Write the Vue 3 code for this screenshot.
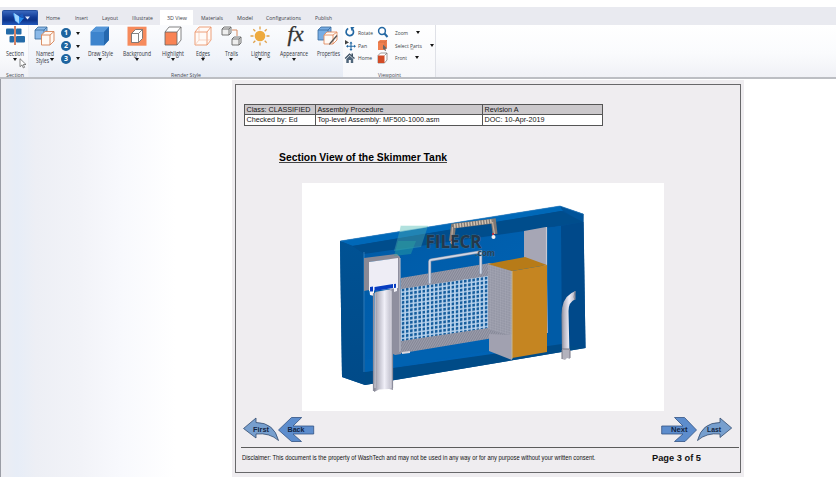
<script setup>
const tabs = [
  { t: 'Home', w: 30, l: 14 },
  { t: 'Insert', w: 27, l: 13 },
  { t: 'Layout', w: 29, l: 16 },
  { t: 'Illustrate', w: 36, l: 21 },
  { t: '3D View', w: 33, l: 20, active: true },
  { t: 'Materials', w: 37, l: 22 },
  { t: 'Model', w: 29, l: 16 },
  { t: 'Configurations', w: 49, l: 35 },
  { t: 'Publish', w: 30, l: 17 }
]
const tools = [
  { id: 'draw', t: 'Draw Style', w: 36, l: 25, caret: true },
  { id: 'background', t: 'Background', w: 38, l: 28, caret: true },
  { id: 'highlight', t: 'Highlight', w: 34, l: 22, caret: true },
  { id: 'edges', t: 'Edges', w: 26, l: 14, caret: true },
  { id: 'trails', t: 'Trails', w: 30, l: 13, caret: true },
  { id: 'lighting', t: 'Lighting', w: 28, l: 19, caret: true },
  { id: 'appearance', t: 'Appearance', w: 40, l: 28, caret: true },
  { id: 'properties', t: 'Properties', w: 28, l: 23 }
]
const views = [
  { id: 'rotate', t: 'Rotate', l: 15 }, { id: 'zoom', t: 'Zoom', l: 13, c: 8 },
  { id: 'pan', t: 'Pan', l: 9 }, { id: 'select', t: 'Select Parts', l: 27, c: 8 },
  { id: 'home', t: 'Home', l: 14 }, { id: 'front', t: 'Front', l: 12, c: 8 }
]
</script>

<template>
  <div class="app">
    <header class="tabbar">
      <div class="appbtn">
        <svg width="36" height="15" viewBox="0 0 36 15">
          <path d="M10 2l6 3 3 4-3 4-4-3z" fill="#3f9df5" /><path d="M11 2l5 3.500v7l-3.500-3z" fill="#9fd4ff" /><path d="M16 6l5 1-5 5.500z" fill="#2389ed" /><path d="M16 5l3.500-2.500L21 7z" fill="#1a5cc0" />
          <path d="M22 5.500h5l-2.500 3z" fill="#e7eeff" />
        </svg>
      </div>
      <nav class="tabs">
        <div v-for="t in tabs" :key="t.t" class="tab" :class="{ active: t.active }" :style="{ width: t.w + 'px' }">
          <svg :width="t.l" height="10"><text x="0" y="7.300" :textLength="t.l" lengthAdjust="spacingAndGlyphs">{{ t.t }}</text></svg>
        </div>
      </nav>
    </header>

    <section class="ribbon">
      <div class="group section">
        <div class="row">
          <div class="tool sec">
            <svg class="ico" width="22" height="21" viewBox="0 0 22 21">
              <g fill="#246ba8"><rect x="2" y="2.500" width="8" height="6" rx="1" /><rect x="12" y="2.500" width="5.500" height="6" rx="1" /><rect x="5.500" y="10" width="4.500" height="6.500" rx="1" /><rect x="12" y="10" width="9" height="6.500" rx="1" /></g>
              <path d="M11 0v19" stroke="#c75b35" stroke-width="1.500" />
            </svg>
            <svg width="18" height="9"><text x="0" y="6.800" textLength="18" lengthAdjust="spacingAndGlyphs">Section</text></svg>
            <i class="caret"></i>
            <svg class="cursor" width="8" height="11" viewBox="0 0 8 11"><path d="M1 .7v8l2-1.800 1.300 3 1.300-.6-1.300-2.800H7z" fill="#fff" stroke="#555" stroke-width=".7" /></svg>
          </div>
        </div>
        <div class="gname"><svg width="18" height="8"><text x="0" y="6.700" textLength="18" lengthAdjust="spacingAndGlyphs">Section</text></svg></div>
      </div>

      <div class="group render">
        <div class="row">
          <div class="tool named">
            <svg class="ico" width="21" height="21" viewBox="0 0 21 21">
              <path d="M1 4l3-3h9v9l-3 3H1z" fill="#8bb9e8" stroke="#376b9d" stroke-width=".8" /><path d="M1 4h9v9m0-9l3-3" fill="none" stroke="#376b9d" stroke-width=".8" />
              <path d="M7.500 9L11 5.500h9V15l-4 4H7.500z" fill="#fffaf6" stroke="#d78255" stroke-width=".9" /><path d="M7.500 9H16v10m0-10l4-3.500" fill="none" stroke="#d78255" stroke-width=".9" />
            </svg>
            <svg width="18" height="17"><text x="0" y="6.800" textLength="18" lengthAdjust="spacingAndGlyphs">Named</text><text x="0" y="14.200" textLength="13" lengthAdjust="spacingAndGlyphs">Styles</text><path d="M13.800 9h4.400L16 12z" fill="#111" /></svg>
          </div>
          <div class="nums">
            <div v-for="n in 3" :key="n" class="num"><b>{{ n }}</b><i class="caret small"></i></div>
          </div>
          <div v-for="t in tools" :key="t.id" class="tool" :style="{ width: t.w + 'px' }">
            <svg class="ico" width="22" height="21" viewBox="0 0 22 21">
              <template v-if="t.id === 'draw'">
                <path d="M1.500 6L7 .8h13V14l-5 5.500H1.500z" fill="#3d84cd" /><path d="M1.500 6L7 .8h13L15 6z" fill="#5597d9" /><path d="M15 6l5-5.200V14l-5 5.500z" fill="#2568ae" />
              </template>
              <template v-else-if="t.id === 'background'">
                <rect x="1.500" y=".7" width="19" height="19" fill="#f68a5c" /><path d="M5.500 7.500l4-4h7v9l-4 4h-7z" fill="#fff" /><path d="M5.500 7.500l4-4h7v9l-4 4h-7zM5.500 7.500h7v9m0-9l4-4" fill="none" stroke="#666" stroke-width=".8" />
              </template>
              <template v-else-if="t.id === 'highlight'">
                <path d="M3 6l4-5h12v13l-4 5H3z" fill="#fff" /><path d="M3 6h12v13H3z" fill="#f98354" /><path d="M3 6l4-5h12v13l-4 5H3zM3 6h12v13m0-13l4-5" fill="none" stroke="#666" stroke-width=".8" />
              </template>
              <template v-else-if="t.id === 'edges'">
                <path d="M3 6l4-5h12v13l-4 5H3zM3 6h12v13m0-13l4-5" fill="#fffaf7" stroke="#eb956c" stroke-width=".9" /><path d="M7 1v13h12M7 14l-4 5" fill="none" stroke="#f3bda3" stroke-width=".6" />
              </template>
              <template v-else-if="t.id === 'trails'">
                <path d="M2 3l2-2h7v6l-2 2H2zM2 3h7v6m0-6l2-2M12 13l2-2h7v6l-2 2h-7zM12 13h7v6m0-6l2-2" fill="#eee" stroke="#666" stroke-width=".9" /><path d="M12 4h5v6" fill="none" stroke="#d88a60" />
              </template>
              <template v-else-if="t.id === 'lighting'">
                <circle cx="11" cy="10" r="5.300" fill="#eeaa3e" /><path d="M11 .5v3m0 13v3M1.500 10h3m13 0h3M4.300 3.300l2 2m9.400 9.400l2 2m0-13.400l-2 2m-9.400 9.400l-2 2" stroke="#e0a14a" stroke-width="1.300" />
              </template>
              <text v-else-if="t.id === 'appearance'" class="fx" x="4.500" y="14.500" textLength="16" lengthAdjust="spacingAndGlyphs">fx</text>
              <template v-else>
                <path d="M1 4l3-3h10v9l-3 4H1z" fill="#77ace3" stroke="#376b9d" stroke-width=".8" /><path d="M1 4h10v10m0-10l3-3" fill="none" stroke="#376b9d" stroke-width=".8" />
                <path d="M7 9l3-3h10v8l-4 4H7zM7 9h9v9m0-9l4-3" fill="#fffaf6" stroke="#e38d61" stroke-width=".9" /><path d="M20.500 10l-7 8-1.500 1 .5-2 7-8z" fill="#555" />
              </template>
            </svg>
            <svg :width="t.l" height="9"><text x="0" y="6.800" :textLength="t.l" lengthAdjust="spacingAndGlyphs">{{ t.t }}</text></svg>
            <i v-if="t.caret" class="caret"></i>
          </div>
        </div>
        <div class="gname"><svg width="30" height="8"><text x="0" y="6.700" textLength="30" lengthAdjust="spacingAndGlyphs">Render Style</text></svg></div>
      </div>

      <div class="group viewpoint">
        <div class="vgrid">
          <div v-for="v in views" :key="v.id" class="vitem" :class="{ right: v.c }">
            <svg width="12" height="12" viewBox="0 0 12 12">
              <g v-if="v.id === 'rotate'"><path d="M4.200 2.600A3.700 3.700 0 1 0 8.300 3.200" fill="none" stroke="#2468a3" stroke-width="1.700" /><path d="M6.500 1h4L7.500 5z" fill="#2468a3" /></g>
              <g v-else-if="v.id === 'zoom'" fill="none" stroke="#2468a3"><circle cx="5" cy="5" r="3.400" stroke-width="1.500" /><path d="M7.500 7.500l3 3.500" stroke-width="2" /></g>
              <g v-else-if="v.id === 'pan'"><path d="M1 1l4 2.500-4 2z" fill="#444" /><path d="M7 3.500v7M3.500 7.200h7" stroke="#2468a3" stroke-width="1.100" /><path d="M5.500 4.500L7 2.500l1.500 2zM5.500 10L7 12l1.500-2zM4 5.700L2 7.200l2 1.500zM10 5.700l2 1.500-2 1.500z" fill="#2468a3" /></g>
              <g v-else-if="v.id === 'select'"><path d="M1 3l2-2h7v8l-2 2H1z" fill="#f0804f" /><path d="M1 3h7v8m0-8l2-2" fill="none" stroke="#c9623a" stroke-width=".6" /><path d="M6 5.500l4 4-2 .2 1 2-1 .3-1-2.200-1 1z" fill="#666" /></g>
              <g v-else-if="v.id === 'home'"><path d="M.700 6L5.500 1.300 7.500 3V1.500H9v3L11 6 10 7 5.700 3 1.500 7z" fill="#3f5366" /><path d="M2.300 7l3.400-3.200L9.200 7v4H6.800V8H4.800v3H2.300z" fill="#50667a" /></g>
              <g v-else><path d="M1 3.500L3.500 1H10v7L7.500 11H1z" fill="#fff" stroke="#77716f" stroke-width=".7" /><path d="M1 3.500h6.500V11H1z" fill="#d24b26" /><path d="M7.500 3.500L10 1" stroke="#77716f" stroke-width=".7" /></g>
            </svg>
            <svg class="vt" :width="v.l" height="9"><text x="0" y="6.800" :textLength="v.l" lengthAdjust="spacingAndGlyphs">{{ v.t }}</text><path v-if="v.id === 'select'" d="M15.500 8h3" stroke="#555" stroke-width=".6" /></svg>
            <i v-if="v.c" class="caret small"></i>
          </div>
        </div>
        <div class="gname"><svg width="23" height="8"><text x="0" y="6.700" textLength="23" lengthAdjust="spacingAndGlyphs">Viewpoint</text></svg></div>
      </div>
    </section>

    <main class="work">
      <article class="page">
        <div class="sheet">
          <div class="info">
            <div class="c h"><svg width="69" height="9"><text x="1.500" y="7" textLength="64" lengthAdjust="spacingAndGlyphs">Class: CLASSIFIED</text></svg></div>
            <div class="c h"><svg width="160" height="9"><text x="1.500" y="7" textLength="66" lengthAdjust="spacingAndGlyphs">Assembly Procedure</text></svg></div>
            <div class="c h"><svg width="110" height="9"><text x="1.500" y="7" textLength="34" lengthAdjust="spacingAndGlyphs">Revision A</text></svg></div>
            <div class="c"><svg width="69" height="9"><text x="1.500" y="7" textLength="51" lengthAdjust="spacingAndGlyphs">Checked by: Ed</text></svg></div>
            <div class="c"><svg width="160" height="9"><text x="1.500" y="7" textLength="122" lengthAdjust="spacingAndGlyphs">Top-level Assembly: MF500-1000.asm</text></svg></div>
            <div class="c"><svg width="110" height="9"><text x="1.500" y="7" textLength="60" lengthAdjust="spacingAndGlyphs">DOC: 10-Apr-2019</text></svg></div>
          </div>
          <h1><svg width="168" height="14"><text x="0" y="9.500" textLength="168" lengthAdjust="spacingAndGlyphs">Section View of the Skimmer Tank</text><path d="M0 11.500h168" stroke="#444" stroke-width="1.200" /></svg></h1>
          <svg class="model" width="362" height="228" viewBox="302 183 362 228">
            <defs>
              <linearGradient id="back" x1="0" y1="0" x2="1" y2="1"><stop offset="0" stop-color="#005aa5" /><stop offset="1" stop-color="#0066ba" /></linearGradient>
              <linearGradient id="left" x1="0" y1="0" x2="0" y2="1"><stop offset="0" stop-color="#005294" /><stop offset="1" stop-color="#004a88" /></linearGradient>
              <linearGradient id="tube" x1="0" x2="1"><stop offset="0" stop-color="#82828f" /><stop offset=".18" stop-color="#b4b3c0" /><stop offset=".55" stop-color="#f0eff8" /><stop offset=".84" stop-color="#c9c8d4" /><stop offset="1" stop-color="#8d8d9a" /></linearGradient>
              <pattern id="mesh" width="4.150" height="4.200" patternUnits="userSpaceOnUse" patternTransform="translate(401 288) skewY(-8)"><rect width="4.150" height="4.200" fill="#b8d2ec" /><rect x=".8" y=".8" width="2.500" height="2.800" fill="#155d9d" /></pattern>
              <pattern id="hatch" width="2" height="2" patternUnits="userSpaceOnUse" patternTransform="rotate(30)"><rect width="2" height="2" fill="#9b9dac" /><rect width="1" height="2" fill="#858796" /></pattern>
              <pattern id="grid" width="2.500" height="2.500" patternUnits="userSpaceOnUse" patternTransform="skewY(16)"><rect width="2.500" height="2.500" fill="#9597a6" /><path d="M0 0h2.500M0 0v2.500" stroke="#b0b0be" stroke-width=".6" /></pattern>
            </defs>
            <path d="M340 241L560 206l23.500 8L585.500 348 365 385l-23-8z" fill="#004f92" />
            <path d="M340 241L560 206l8 4-215 36z" fill="#0068b8" />
            <path d="M560 206l23.500 8-.5 9-21-13z" fill="#005399" />
            <path d="M352 246l209-35 22 11-219 32z" fill="#004d8c" />
            <path d="M340 241l12 5 12 8 1 131-23-8z" fill="url(#left)" />
            <path d="M364 254l197-28 1 119-197 27z" fill="url(#back)" />
            <path d="M547 228l15-2 1 119-16 3z" fill="#005ba6" />
            <path d="M561 226l22.500-4 2 126-23.500-3z" fill="#00498a" />
            <path d="M365 372l197-28 23.500 4L365 385z" fill="#004b87" />
            <path d="M365 360l124-19 24 6-148 25z" fill="#0062b1" />
            <path d="M364 252v120" stroke="#3f91ce" stroke-width=".7" />
            <path d="M340.500 241L560 206l23 8" fill="none" stroke="#3585c5" stroke-width=".6" />
            <path d="M524 231l22-4 2 106h-3V266l-21-7z" fill="#a6a6b5" /><path d="M546.500 227v106" stroke="#c8c8d1" stroke-width="1.200" />
            <path d="M397 254l3 3 1 97-6 1-5-3V256z" fill="#8f8f9f" /><path d="M400 258v95" stroke="#c5c4cd" />
            <path d="M364 258l32-4 4 4-31 4v28l-5 1z" fill="#898995" />
            <path d="M369 262l29-4v30l-29 3z" fill="#eeedf5" />
            <path d="M369 287l28-4v8l-3 1v-5l-20 3v6l-4-1z" fill="#f4f4fb" /><path d="M374.500 287l18.500-3v4l-18.500 3zM370 287l3-.4v5l-3-.2zM394 284l2-.3v4l-2 .4z" fill="#083dc0" />
            <path d="M375 292l17-3 1 101-4-1-10 .5-5 2.500z" fill="url(#tube)" /><path d="M373.500 293v98M392.500 290v98" stroke="#8d8e9d" stroke-width="1.200" />
            <path d="M375 293v95M391 291v97" stroke="#e7e6ef" stroke-width=".8" />
            <path d="M401 278l89-15 22 8v64l-109 18h-5l3-2z" fill="url(#hatch)" />
            <path d="M401 289l87-13v52l-87 13z" fill="url(#mesh)" />
            <path d="M488 263l24 8v65l-24-7z" fill="url(#grid)" />
            <path d="M489 334l23 1v25l-23-9z" fill="#a1a1b0" />
            <path d="M402 352l8-1v2l-8 1z" fill="#d8d8df" />
            <path d="M429.700 283.500V261.200q0-1 1.500-1.300l49.500-8.200v22" fill="none" stroke="#7f91ad" stroke-width="3" /><path d="M429.700 283.500V261.200q0-1 1.500-1.300l49.500-8.200v22" fill="none" stroke="#d1d7e5" stroke-width="1.800" />
            <path d="M488 264l37-7 22 8-35 6z" fill="#b77b18" /><path d="M512 271l35-6v87l-35 6z" fill="#c58521" /><path d="M512 271v88" stroke="#c4b797" stroke-width="1" />
            <path d="M562 357l-.5-42q0-16 10-22l4-2v8q-7 3-7 12l1 45-3 1z" fill="url(#tube)" /><path d="M575 291l-1 6 1 3" fill="none" stroke="#878896" /><path d="M562 349h8v10l-3-1-2 2-3-1z" fill="#b3b2bd" /><path d="M562 349h8m-8 1v9m8-9v8" stroke="#777784" />
            <path d="M401 226h27l-7 21-27 4z" fill="#4aa7b0" opacity=".45" /><path d="M398 241h18l-5 13-17 2z" fill="#2ba4a2" opacity=".45" />
            <path d="M400.500 225.500h27.500l-1.500 2-27 4.500z" fill="#b4e8df" opacity=".6" />
            <path d="M451.500 241l2-15 40-5 1.500 13" fill="none" stroke="#817974" stroke-width="5" /><path d="M454 226l39-5" stroke="#d4c4b2" stroke-width="4" stroke-dasharray="1.500 1.300" /><path d="M451.500 242l1-15m40-5l2 12" stroke="#c2aea0" stroke-width="1.200" />
            <circle cx="452.500" cy="242.500" r="2" fill="#f4eeee" /><circle cx="493.500" cy="237" r="2" fill="#f4eeee" /><path d="M452 239v2m41-8v2" stroke="#bc3440" stroke-width="2" />
            <text class="mark" x="425.500" y="247.500" textLength="56" lengthAdjust="spacingAndGlyphs">FILECR</text>
            <text class="com" x="475" y="255.500" textLength="20" lengthAdjust="spacingAndGlyphs">.com</text>
          </svg>
          <div class="nav">
            <svg width="74" height="26" viewBox="242 416 74 26">
              <path d="M243.500 428.500L256 418v4.500q18 0 22.500 18-9-8-22.500-6.500v4z" fill="#779fce" stroke="#344b6e" stroke-width=".8" />
              <path d="M278.500 430l13-12.500h10.200L293 426h20.700v8H293l8.500 7.500h-10z" fill="#5d8dcd" stroke="#345383" stroke-width=".8" />
              <text x="253" y="432" textLength="16" lengthAdjust="spacingAndGlyphs">First</text><text x="287.500" y="432" textLength="17" lengthAdjust="spacingAndGlyphs">Back</text>
            </svg>
            <svg width="74" height="26" viewBox="660 416 74 26">
              <path d="M661.700 426H683l-8.500-8.500h10l12 12.500-11.500 11.500h-10.500l8.500-7.500h-21.300z" fill="#5d8dcd" stroke="#345383" stroke-width=".8" />
              <path d="M731.700 428L720 418v4.500q-18 0-22.500 18 9-8 22.500-6.500v3.500z" fill="#779fce" stroke="#344b6e" stroke-width=".8" />
              <text x="671" y="432" textLength="16.500" lengthAdjust="spacingAndGlyphs">Next</text><text x="707" y="431.500" textLength="14" lengthAdjust="spacingAndGlyphs">Last</text>
            </svg>
          </div>
          <footer>
            <svg width="354" height="12"><text class="disc" x="0" y="9" textLength="353.500" lengthAdjust="spacingAndGlyphs">Disclaimer: This document is the property of WashTech and may not be used in any way or for any purpose without your written consent.</text></svg>
            <svg width="50" height="13"><text class="pg" x="0" y="9.500" textLength="49" lengthAdjust="spacingAndGlyphs">Page 3 of 5</text></svg>
          </footer>
        </div>
      </article>
    </main>
  </div>
</template>

<style>
body { margin: 0; background: #fff; }
</style>
<style scoped>
* { box-sizing: border-box; }
svg { display: block; flex: none; overflow: visible; }
.app { width: 836px; height: 484px; padding-top: 7px; overflow: hidden; background: #fff; font-family: "Open Sans", "Noto Sans", sans-serif; }
.tabbar { height: 18px; display: flex; align-items: flex-end; padding-left: 2px; background: #e9eaf0; }
.appbtn { width: 36px; height: 15px; background: linear-gradient(#3a68be, #123b95 45%, #0c3289 65%, #2259bd); border: 1px solid #254f9f; border-bottom: 0; border-radius: 2px 2px 0 0; }
.tabs { display: flex; align-items: flex-end; }
.tab { height: 15px; display: flex; align-items: center; justify-content: center; }
.tab.active { background: #fff; }
.tab text { font-size: 6px; fill: #3c4048; }
.ribbon { height: 54px; display: flex; padding-left: 2px; border-bottom: 2px solid #bcbec3; background: linear-gradient(#fff, #fafbfd 55%, #f0f1f6); }
.group { height: 52px; display: flex; flex-direction: column; }
.section { width: 27px; border-right: 1px solid #eceef3; }
.render { width: 314px; background: linear-gradient(#fbfcfe, #f1f4fa 60%, #e6ebf4); }
.viewpoint { width: 93px; border-right: 1px solid #dfe1e7; background: linear-gradient(#fff, #f6f7fa); }
.row { display: flex; height: 45px; }
.tool { display: flex; flex-direction: column; align-items: center; padding-top: 1px; }
.tool text { font-size: 6.200px; fill: #33373f; }
.sec { width: 26px; position: relative; }
.named { width: 31px; }
.ico { margin-bottom: 2px; }
.caret { width: 0; height: 0; border: 2.500px solid transparent; border-top: 3px solid #161616; border-bottom: 0; flex: none; }
.caret.small { border-left-width: 2px; border-right-width: 2px; }
.cursor { position: absolute; left: 17px; top: 33px; }
.nums { width: 22px; padding: 2px 0 0 1px; }
.num { height: 12.700px; display: flex; align-items: center; gap: 5px; }
.num b { width: 10px; height: 10px; border-radius: 50%; background: #1e649f; color: #fff; font-size: 7px; line-height: 10px; text-align: center; }
.gname { display: flex; justify-content: center; height: 7px; }
.gname text { font-size: 5.700px; fill: #454951; }
.tool text.fx { font: italic 20px "Liberation Serif", serif; fill: #333; stroke: #333; stroke-width: .3px; }
.vgrid { display: grid; grid-template-columns: 33px 60px; grid-template-rows: repeat(3, 12.700px); height: 45px; padding: 1px 0 0 1px; }
.vitem { display: flex; align-items: center; gap: 2px; }
.vitem text { font-size: 6px; fill: #3a3e46; }
.vitem.right .vt { margin-left: 4px; }
.vitem .caret { margin-left: 6px; }
.work { height: 398px; display: flex; border-left: 1px solid #9a9da5; padding: 1px 0 0 231px; background: linear-gradient(90deg, #ecedf2, #e7edf7 16px, #edeff5 35px, #f2f3f8 80px, #f8f9fd 120px, #fff 175px); }
.page { width: 512px; height: 397px; padding: 4px 3px; background: #efedf0; }
.sheet { width: 506px; height: 389px; border: 1px solid #68686a; font-family: "Liberation Sans", Arial, sans-serif; display: flex; flex-direction: column; }
.info { margin: 19px 0 0 8px; width: 359px; height: 22px; display: grid; grid-template-columns: 71px 167px 119px; grid-template-rows: 10px 10px; border: 1px solid #555; background: #fff; }
.c { border-right: 1px solid #555; }
.c:nth-child(3n) { border-right: 0; }
.c.h { background: #cbc8cb; border-bottom: 1px solid #555; }
.info text { font-size: 7.400px; fill: #161616; }
h1 { margin: 25px 0 0 42.500px; height: 14px; font-size: 10.500px; font-weight: bold; }
.model { margin: 18px 0 0 66px; background: #fff; }
.mark { font: bold 17px "Open Sans", sans-serif; fill: #24384a; stroke: #5f8296; stroke-width: .5px; paint-order: stroke; }
.com { font: bold 9px "Open Sans", sans-serif; fill: #24425a; stroke: #5f8fae; stroke-width: .4px; paint-order: stroke; }
.nav { margin-top: 5px; padding: 0 6px; display: flex; justify-content: space-between; }
.nav text { font: bold 7.500px "Liberation Sans", sans-serif; fill: #122544; }
footer { margin: 5px 1px 0 5px; height: 24px; padding: 3px 37.500px 0 .5px; display: flex; justify-content: space-between; border-top: 1.500px solid #5b5b5b; }
.disc { font-size: 7px; fill: #111; }
.pg { font-size: 9px; font-weight: bold; fill: #111; }
</style>
